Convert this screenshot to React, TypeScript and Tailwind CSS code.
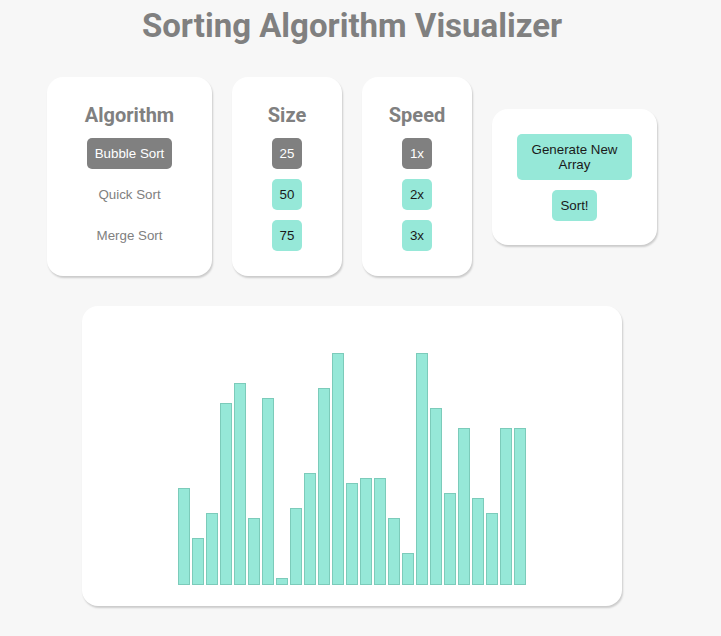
import { useState } from 'react';

const ALGORITHMS = ['Bubble Sort', 'Quick Sort', 'Merge Sort'];
const SIZES = [25, 50, 75];
const SPEEDS = ['1x', '2x', '3x'];

const INITIAL_VALUES = [
  19, 9, 14, 36, 40, 13, 37, 1, 15, 22, 39, 46, 20, 21, 21, 13, 6, 46, 35, 18, 31, 17, 14, 31, 31,
];

const cardClass =
  'flex flex-col items-center rounded-2xl bg-white shadow-[1px_2px_2px_rgba(0,0,0,0.18)]';
const btnBase =
  'rounded-[5px] px-2 py-2 text-[13.33px] leading-[15px] font-["Liberation_Sans",Arial,sans-serif]';

function Panel({
  title,
  width,
  options,
  selected,
  onSelect,
  plainInactive = false,
}: {
  title: string;
  width: string;
  options: string[];
  selected: string;
  onSelect: (v: string) => void;
  plainInactive?: boolean;
}) {
  return (
    <div className={`${cardClass} ${width} pt-[26px] pb-[25px]`}>
      <h2 className="font-['Roboto',sans-serif] text-[20px] leading-6 font-bold text-[#808080]">{title}</h2>
      <div className="mt-[11px] flex flex-col items-center gap-[10px]">
        {options.map((opt) => {
          const active = opt === selected;
          const tone = active
            ? 'bg-[#808080] text-white'
            : plainInactive
              ? 'bg-transparent text-[#808080]'
              : 'bg-[#96e8d8] text-[#1a1a1a]';
          return (
            <button key={opt} type="button" onClick={() => onSelect(opt)} className={`${btnBase} ${tone}`}>
              {opt}
            </button>
          );
        })}
      </div>
    </div>
  );
}

export default function App() {
  const [algorithm, setAlgorithm] = useState('Bubble Sort');
  const [size, setSize] = useState('25');
  const [speed, setSpeed] = useState('1x');
  const [values, setValues] = useState(INITIAL_VALUES);

  const regenerate = () => {
    const n = Number(size);
    setValues(Array.from({ length: n }, () => 1 + Math.floor(Math.random() * 46)));
  };

  return (
    <div className="min-h-screen bg-[#f7f7f7] pr-[17px] pb-[30px]">
      <h1 className="pt-[6px] text-center font-['Roboto',sans-serif] text-[33px] leading-10 font-bold text-[#808080]">
        Sorting Algorithm Visualizer
      </h1>

      <div className="mt-[31px] flex items-center justify-center gap-5">
        <Panel
          title="Algorithm"
          width="w-[165px]"
          options={ALGORITHMS}
          selected={algorithm}
          onSelect={setAlgorithm}
          plainInactive
        />
        <Panel
          title="Size"
          width="w-[110px]"
          options={SIZES.map(String)}
          selected={size}
          onSelect={setSize}
        />
        <Panel title="Speed" width="w-[110px]" options={SPEEDS} selected={speed} onSelect={setSpeed} />
        <div className={`${cardClass} w-[165px] gap-[10px] pt-[25px] pb-[24px]`}>
          <button type="button" onClick={regenerate} className={`${btnBase} w-[115px] bg-[#96e8d8] text-[#1a1a1a]`}>
            Generate New Array
          </button>
          <button type="button" className={`${btnBase} bg-[#96e8d8] text-[#1a1a1a]`}>
            Sort!
          </button>
        </div>
      </div>

      <div
        className={`${cardClass} mx-auto mt-[30px] h-[300px] w-[540px] !flex-row !items-end justify-center gap-[2px] pb-[21px]`}
      >
        {values.map((v, i) => (
          <div
            key={i}
            className="w-[12px] border border-[#7ccbba] bg-[#96e8d8]"
            style={{ height: v * 5 + 2 }}
          />
        ))}
      </div>
    </div>
  );
}
